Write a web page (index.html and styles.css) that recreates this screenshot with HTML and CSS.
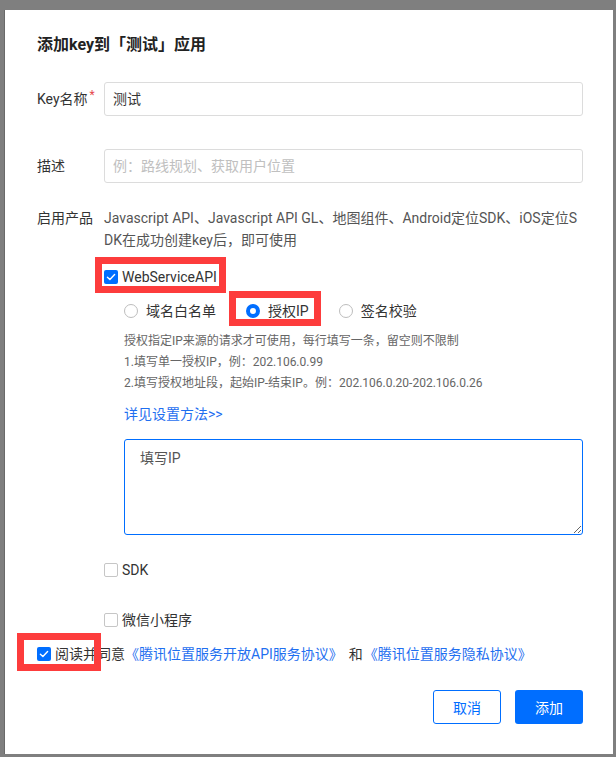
FILE: index.html
```html
<!DOCTYPE html>
<html lang="zh-CN">
<head>
<meta charset="utf-8">
<title>添加key</title>
<link rel="stylesheet" href="styles.css">
</head>
<body>
<div class="dialog">
  <h1 class="title">添加key到「测试」应用</h1>

  <div class="form-row row-key">
    <div class="label">Key名称<span class="req">*</span></div>
    <div class="input">测试</div>
  </div>

  <div class="form-row row-desc">
    <div class="label">描述</div>
    <div class="input placeholder">例：路线规划、获取用户位置</div>
  </div>

  <div class="form-row row-products">
    <div class="label label-text">启用产品</div>
    <div class="field">
      <p class="desc">Javascript API、Javascript API GL、地图组件、Android定位SDK、iOS定位SDK在成功创建key后，即可使用</p>

      <div class="check check-ws">
        <span class="box on"><svg viewBox="0 0 14 14" width="14" height="14"><path d="M3.4 7.2 L5.9 9.6 L10.6 4.6" fill="none" stroke="#fff" stroke-width="1.4" stroke-linecap="round" stroke-linejoin="round"/></svg></span>
        <span>WebServiceAPI</span>
      </div>

      <div class="sub">
        <div class="radios">
          <div class="radio"><span class="circle"></span><span>域名白名单</span></div>
          <div class="radio"><span class="circle on"></span><span>授权IP</span></div>
          <div class="radio"><span class="circle"></span><span>签名校验</span></div>
        </div>
        <div class="help">
          <div>授权指定IP来源的请求才可使用，每行填写一条，留空则不限制</div>
          <div>1.填写单一授权IP，例：202.106.0.99</div>
          <div>2.填写授权地址段，起始IP-结束IP。例：202.106.0.20-202.106.0.26</div>
        </div>
        <div class="link">详见设置方法&gt;&gt;</div>
        <textarea class="ta">填写IP</textarea>
      </div>

      <div class="check check-sdk">
        <span class="box"></span>
        <span>SDK</span>
      </div>
      <div class="check check-wx">
        <span class="box"></span>
        <span>微信小程序</span>
      </div>
    </div>
  </div>

  <div class="check agree">
    <span class="box on"><svg viewBox="0 0 14 14" width="14" height="14"><path d="M3.4 7.2 L5.9 9.6 L10.6 4.6" fill="none" stroke="#fff" stroke-width="1.4" stroke-linecap="round" stroke-linejoin="round"/></svg></span>
    <span>阅读并同意</span>
    <span class="blue">《腾讯位置服务开放API服务协议》</span>
    <span class="and">和</span>
    <span class="blue">《腾讯位置服务隐私协议》</span>
  </div>

  <div class="footer">
    <div class="btn btn-cancel">取消</div>
    <div class="btn btn-primary">添加</div>
  </div>
</div>

<div class="mark mark-ws"></div>
<div class="mark mark-ip"></div>
<div class="mark mark-agree"></div>
</body>
</html>
```

FILE: styles.css
```css
html, body {
  margin: 0;
  padding: 0;
}
body {
  background: #7f7f7f;
  font-family: Roboto, "Noto Sans CJK SC", sans-serif;
  font-size: 14px;
  color: #333;
  width: 616px;
  height: 757px;
  overflow: hidden;
  position: relative;
}
.dialog {
  margin: 10px 0 0 4px;
  width: 609px;
  height: 744px;
  background: #fff;
  box-sizing: border-box;
  padding: 23px 30px 0 32px;
  border-left: 1px solid #6a6a6a;
}
.title {
  margin: 0;
  font-size: 16px;
  font-weight: 700;
  line-height: 24px;
  color: #222;
  padding-left: -1px;
}
.form-row {
  display: flex;
}
.label {
  width: 67px;
  flex-shrink: 0;
  line-height: 34px;
  color: #333;
  white-space: nowrap;
}
.label-text {
  line-height: 22px;
}
.req {
  color: #e5484d;
  font-size: 12px;
  margin-left: 2px;
  position: relative;
  top: -5px;
}
.row-key { margin-top: 25px; }
.row-desc { margin-top: 32px; }
.row-products { margin-top: 24px; }
.input {
  flex: 1;
  height: 34px;
  box-sizing: border-box;
  border: 1px solid #dcdcdc;
  border-radius: 3px;
  padding: 0 8px;
  line-height: 32px;
  color: #333;
}
.input.placeholder {
  color: #c0c0c0;
}
.field {
  flex: 1;
  min-width: 0;
}
.desc {
  margin: 0;
  line-height: 22px;
  color: #555;
  word-break: break-all;
}
.check {
  display: flex;
  align-items: center;
  height: 20px;
  line-height: 20px;
  color: #333;
  white-space: nowrap;
}
.box {
  width: 14px;
  height: 14px;
  box-sizing: border-box;
  border: 1px solid #c6c6c6;
  border-radius: 2px;
  margin-right: 4px;
  background: #fff;
  flex-shrink: 0;
  display: flex;
}
.box.on {
  background: #006eff;
  border: none;
}
.check-ws { margin-top: 16px; }
.check-sdk { margin-top: 25px; }
.check-wx { margin-top: 30px; }
.sub {
  padding-left: 20px;
}
.radios {
  display: flex;
  margin-top: 14px;
  line-height: 20px;
  color: #333;
}
.radio {
  display: flex;
  align-items: center;
  margin-right: 30px;
}
.circle {
  width: 14px;
  height: 14px;
  box-sizing: border-box;
  border: 1px solid #bdbdbd;
  border-radius: 50%;
  margin-right: 8px;
  background: #fff;
}
.circle.on {
  border: 4px solid #006eff;
}
.help {
  margin-top: 10px;
  font-size: 12px;
  line-height: 21px;
  color: #666;
}
.link {
  margin-top: 10px;
  line-height: 20px;
  color: #1f6ff0;
}
.ta {
  display: block;
  margin-top: 15px;
  width: 100%;
  height: 96px;
  box-sizing: border-box;
  border: 1px solid #006eff;
  border-radius: 3px;
  padding: 8px 15px;
  font-family: Roboto, "Noto Sans CJK SC", sans-serif;
  font-size: 14px;
  line-height: 20px;
  color: #555;
  outline: none;
  background: #fff;
}
.agree {
  margin-top: 14px;
}
.blue {
  color: #1f6ff0;
}
.and {
  margin: 0 1px 0 6px;
}
.footer {
  margin-top: 26px;
  display: flex;
  justify-content: flex-end;
  gap: 14px;
}
.btn {
  width: 68px;
  height: 34px;
  box-sizing: border-box;
  border-radius: 3px;
  display: flex;
  align-items: center;
  justify-content: center;
  font-size: 14px;
}
.btn-cancel {
  border: 1px solid #006eff;
  color: #006eff;
  background: #fff;
}
.btn-primary {
  background: #006eff;
  color: #fff;
}
.mark {
  position: absolute;
  border: 7px solid #fd3c3c;
  box-sizing: border-box;
  z-index: 2;
}
.mark-ws { left: 95px; top: 257px; width: 131px; height: 36px; }
.mark-ip { left: 229px; top: 291px; width: 92px; height: 35px; }
.mark-agree { left: 17px; top: 633px; width: 84px; height: 38px; }
```
